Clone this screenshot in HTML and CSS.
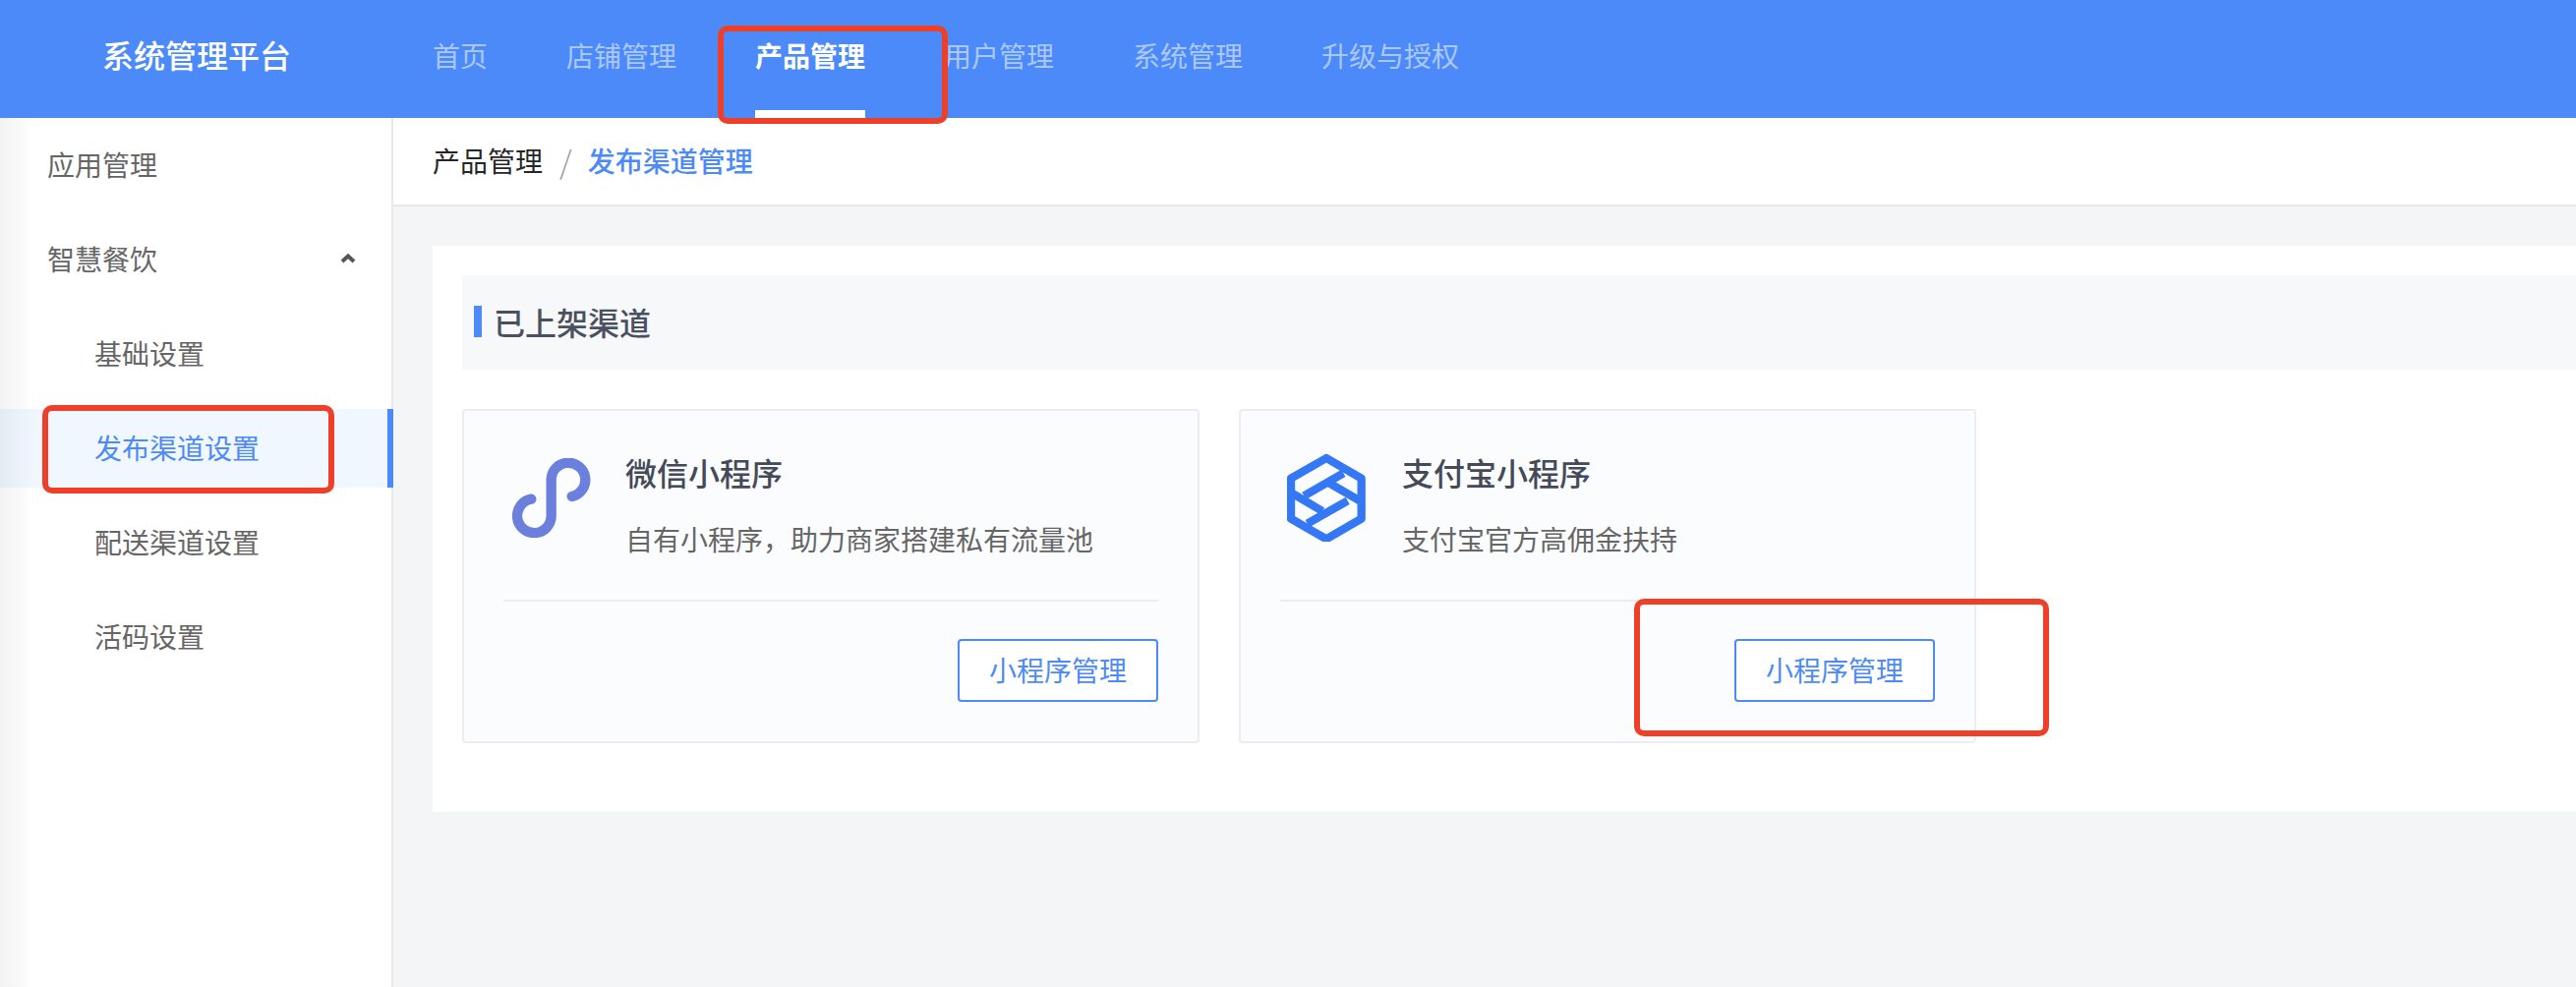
FILE: index.html
```html
<!DOCTYPE html>
<html lang="zh-CN">
<head>
  <meta charset="UTF-8">
  <meta name="viewport" content="width=device-width, initial-scale=1.0">
  <title>系统管理平台</title>
  <link rel="stylesheet" href="styles.css">
</head>
<body>

  <header class="top-bar">
    <div class="logo">系统管理平台</div>
    <nav class="top-nav">
      <a class="top-link">首页</a>
      <a class="top-link">店铺管理</a>
      <a class="top-link active">产品管理</a>
      <a class="top-link">用户管理</a>
      <a class="top-link">系统管理</a>
      <a class="top-link">升级与授权</a>
    </nav>
  </header>

  <div class="layout">
    <aside class="side-bar">
      <a class="side-item">应用管理</a>
      <a class="side-item side-group">
        智慧餐饮
        <svg class="chevron" width="16" height="10" viewBox="0 0 16 10"><polyline points="2,8 8,2.5 14,8"/></svg>
      </a>
      <a class="side-item sub">基础设置</a>
      <a class="side-item sub active">发布渠道设置</a>
      <a class="side-item sub">配送渠道设置</a>
      <a class="side-item sub">活码设置</a>
    </aside>

    <main class="main">
      <div class="breadcrumb">
        <span>产品管理</span>
        <span class="crumb-sep">/</span>
        <span class="crumb-current">发布渠道管理</span>
      </div>

      <div class="content">
        <section class="panel">
          <h2 class="section-title"><span>已上架渠道</span></h2>

          <div class="card-row">
            <div class="card">
              <div class="card-top">
                <div class="card-icon">
                  <svg class="icon-wx" width="80" height="81" viewBox="90 45 240 243">
                    <path class="wx-path" d="M148 170 A52 52 0 1 0 209 222 V110 A52 52 0 1 1 272 162"/>
                  </svg>
                </div>
                <div>
                  <h3 class="card-name">微信小程序</h3>
                  <p class="card-desc">自有小程序，助力商家搭建私有流量池</p>
                </div>
              </div>
              <div class="card-foot"><button class="btn">小程序管理</button></div>
            </div>

            <div class="card">
              <div class="card-top">
                <div class="card-icon">
                  <svg class="icon-ali" width="80" height="90" viewBox="60 30 240 270">
                    <g class="ali-path">
                      <polygon points="180,45 287,107 287,230 180,292 72,230 72,107"/>
                      <line x1="232" y1="91" x2="112" y2="160"/>
                      <line x1="72" y1="150" x2="168" y2="207"/>
                      <line x1="245" y1="175" x2="122" y2="245"/>
                      <line x1="190" y1="122" x2="287" y2="178"/>
                    </g>
                  </svg>
                </div>
                <div>
                  <h3 class="card-name">支付宝小程序</h3>
                  <p class="card-desc">支付宝官方高佣金扶持</p>
                </div>
              </div>
              <div class="card-foot"><button class="btn">小程序管理</button></div>
            </div>
          </div>
        </section>
      </div>
    </main>
  </div>

  <!-- red marks drawn over the screenshot -->
  <div class="mark mark-nav"></div>
  <div class="mark mark-side"></div>
  <div class="mark mark-btn"></div>

</body>
</html>
```

FILE: styles.css
```css
* {
  box-sizing: border-box;
}
html, body {
  height: 100%;
}
body {
  margin: 0;
  position: relative;
  overflow: hidden;
  display: flex;
  flex-direction: column;
  font-family: "Noto Sans CJK SC", "Noto Sans", sans-serif;
  font-size: 28px;
  color: #333;
  background-color: #f3f5f7;
}

/* top bar */
.top-bar {
  display: flex;
  height: 120px;
  flex-shrink: 0;
  background-color: #4c8af9;
}
.logo {
  width: 440px;
  padding: 0 0 11px 104px;
  display: flex;
  align-items: center;
  font-size: 32px;
  font-weight: 500;
  color: #fff;
}
.top-nav {
  display: flex;
  gap: 80px;
}
.top-link {
  display: flex;
  align-items: center;
  border-bottom: 8px solid transparent;
  color: rgba(255, 255, 255, 0.55);
}
.top-link.active {
  color: #fff;
  font-weight: 700;
  border-bottom-color: #fff;
}

.layout {
  flex: 1;
  display: flex;
  min-height: 0;
}

/* left menu */
.side-bar {
  position: relative;
  width: 400px;
  flex-shrink: 0;
  padding-top: 8px;
  display: flex;
  flex-direction: column;
  gap: 16px;
  background-color: #fff;
  border-right: 2px solid #e8e9eb;
}
.side-bar::before {
  content: "";
  position: absolute;
  top: 0;
  bottom: 0;
  left: 0;
  width: 36px;
  background: linear-gradient(to right, rgba(0, 0, 0, 0.05), rgba(0, 0, 0, 0));
}
.side-item {
  height: 80px;
  padding: 0 36px 3px 48px;
  display: flex;
  align-items: center;
  justify-content: space-between;
  color: #666;
}
.side-item.sub {
  padding-left: 96px;
}
.side-item.active {
  color: #4c8af9;
  background-color: #f0f7ff;
  margin-right: -2px;
  border-right: 6px solid #4c8af9;
}
.chevron polyline {
  fill: none;
  stroke: #555;
  stroke-width: 4;
}

/* main area */
.main {
  flex: 1;
  min-width: 0;
  display: flex;
  flex-direction: column;
}
.breadcrumb {
  height: 90px;
  padding: 0 0 2px 40px;
  display: flex;
  align-items: center;
  background-color: #fff;
  border-bottom: 2px solid #e8e9eb;
  color: #262626;
}
.crumb-sep {
  margin: 0 16px 0 17px;
  font-size: 32px;
  color: #999;
  font-weight: 300;
}
.crumb-current {
  color: #4c8af9;
  font-weight: 500;
}
.content {
  padding: 40px 0 0 40px;
}
.panel {
  padding: 30px 0 70px 30px;
  background-color: #fff;
}
.section-title {
  height: 96px;
  margin: 0 0 40px;
  padding: 0 0 2px 12px;
  display: flex;
  align-items: center;
  background-color: #f7f8fa;
  font-size: 32px;
  font-weight: 500;
  color: #4a5060;
}
.section-title span {
  padding-left: 12px;
  border-left: 8px solid #4c8af9;
  line-height: 32px;
}

/* channel cards */
.card-row {
  display: flex;
  gap: 40px;
}
.card {
  width: 750px;
  height: 340px;
  padding: 0 40px;
  background-color: #fbfcfe;
  border: 2px solid #ecedf0;
  border-radius: 4px;
}
.card-top {
  height: 194px;
  padding-top: 38px;
  display: flex;
  border-bottom: 2px solid #ecedf0;
}
.card-icon {
  width: 124px;
  flex-shrink: 0;
  padding-left: 7px;
}
.icon-wx {
  margin: 10px 0 0 2px;
}
.icon-ali {
  margin-top: 5px;
}
.card-name {
  margin: 0;
  font-size: 32px;
  line-height: 48px;
  font-weight: 500;
  color: #454a58;
}
.card-desc {
  margin: 24px 0 0;
  line-height: 40px;
  color: #666;
}
.card-foot {
  padding-top: 38px;
  display: flex;
  justify-content: flex-end;
}
.btn {
  height: 64px;
  padding: 0 30px 3px;
  background-color: #fff;
  border: 2px solid #4c8af9;
  border-radius: 4px;
  font-family: inherit;
  font-size: 28px;
  color: #4c8af9;
}
.wx-path {
  fill: none;
  stroke: #6b80dc;
  stroke-width: 31;
  stroke-linecap: round;
}
.ali-path {
  fill: none;
  stroke: #3478f6;
  stroke-width: 25;
  stroke-linejoin: round;
}

/* red annotation boxes */
.mark {
  position: absolute;
  border: 6px solid #ee4028;
  border-radius: 10px;
}
.mark-nav {
  left: 730px;
  top: 26px;
  width: 234px;
  height: 100px;
}
.mark-side {
  left: 43px;
  top: 412px;
  width: 297px;
  height: 90px;
}
.mark-btn {
  left: 1662px;
  top: 609px;
  width: 422px;
  height: 140px;
}
```
